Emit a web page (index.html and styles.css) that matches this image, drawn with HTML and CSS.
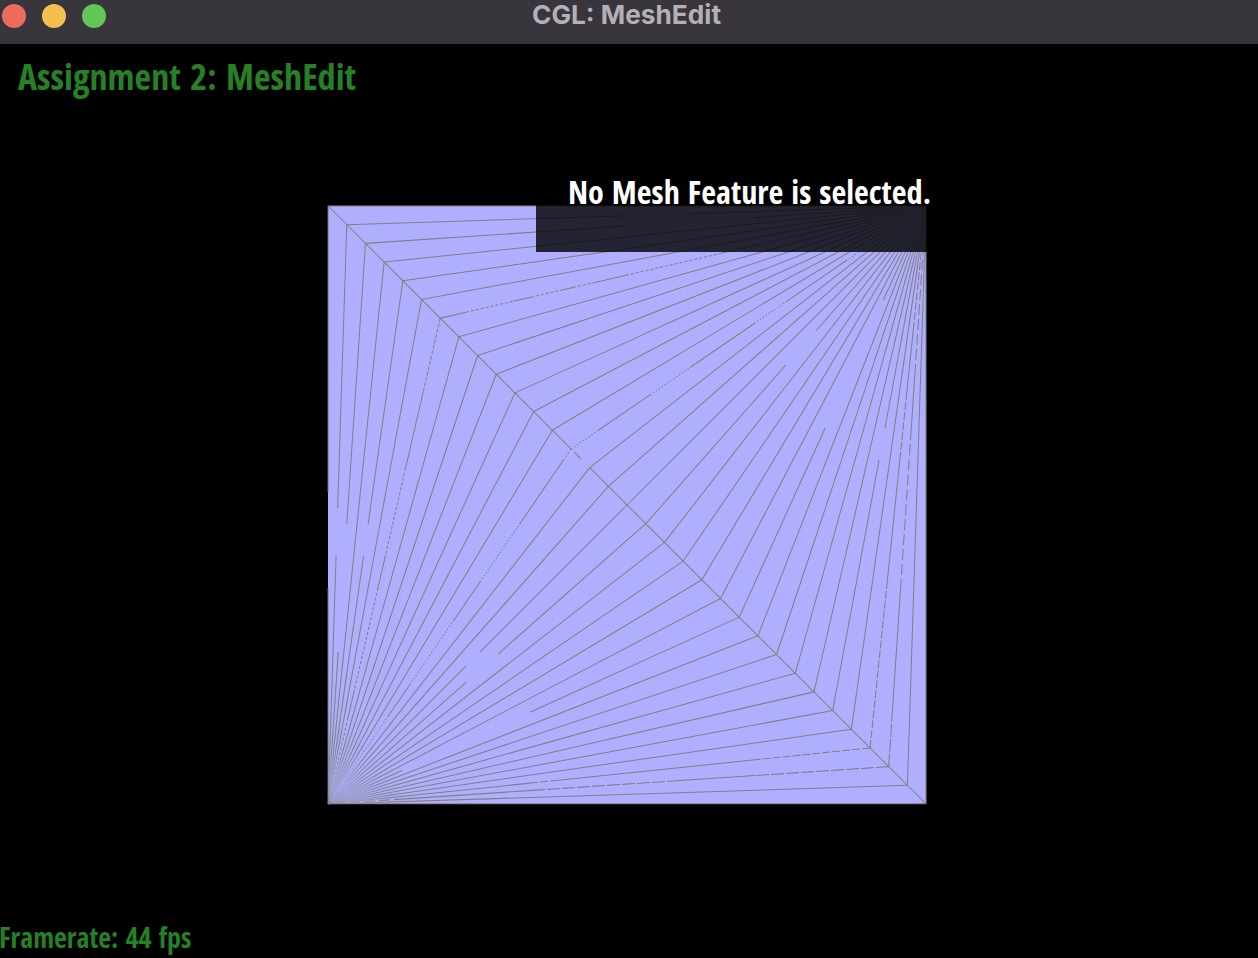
FILE: index.html
```html
<!DOCTYPE html>
<html lang="en">
<head>
<meta charset="utf-8">
<title>CGL: MeshEdit</title>
<link rel="stylesheet" href="styles.css">
</head>
<body>
<div class="window">
  <header class="titlebar">
    <div class="lights"><span class="light close"></span><span class="light minimize"></span><span class="light expand"></span></div>
    <svg class="title" viewBox="0 0 200 30"><text x="4" y="24" textLength="189" lengthAdjust="spacingAndGlyphs">CGL: MeshEdit</text></svg>
  </header>
  <main class="viewport">
    <svg class="scene" viewBox="0 44 1258 914">
      <defs>
        <radialGradient id="fan-lower" gradientUnits="userSpaceOnUse" cx="328" cy="804" r="60">
          <stop offset="0" stop-color="#808080" stop-opacity=".12"/>
          <stop offset=".4" stop-color="#808080" stop-opacity=".4"/>
          <stop offset="1" stop-color="#808080"/>
        </radialGradient>
        <radialGradient id="fan-upper" gradientUnits="userSpaceOnUse" cx="926" cy="206" r="60">
          <stop offset="0" stop-color="#808080" stop-opacity=".12"/>
          <stop offset=".4" stop-color="#808080" stop-opacity=".4"/>
          <stop offset="1" stop-color="#808080"/>
        </radialGradient>
      </defs>
      <rect class="face" x="328" y="206" width="598" height="598"/>
      <g id="edges" class="edges"></g>
      <rect class="panel" x="536" y="205" width="391" height="47"/>
      <text class="hud green title-text" font-size="36" x="18" y="90" textLength="338" lengthAdjust="spacingAndGlyphs">Assignment 2: MeshEdit</text>
      <text class="hud white" font-size="32" x="568" y="204" textLength="363" lengthAdjust="spacingAndGlyphs">No Mesh Feature is selected.</text>
      <text class="hud green" font-size="28" x="-1" y="948" textLength="192.5" lengthAdjust="spacingAndGlyphs">Framerate: 44 fps</text>
    </svg>
  </main>
</div>
<script src="mesh.js"></script>
</body>
</html>
```
FILE: styles.css
```css
body { margin: 0; background: #000; font-family: "Open Sans", sans-serif; }
.window { display: flex; flex-direction: column; width: 1258px; height: 958px; overflow: hidden; }
.titlebar { display: grid; grid-template-columns: 528px 200px 1fr; height: 44px; background: #39353c; }
.lights { display: flex; gap: 16px; padding: 4px 0 0 2px; }
.light { width: 24px; height: 24px; border-radius: 50%; }
.close { background: #ed6a5e; }
.minimize { background: #f5bf4f; }
.expand { background: #62c554; }
.title { width: 200px; height: 30px; fill: #b4b0b7; font: 700 26px Inter, sans-serif; }
.viewport { height: 914px; }
.scene { display: block; width: 1258px; height: 914px; }
.face { fill: #b0afff; }
.edges { stroke: #808080; stroke-width: 1.05; fill: none; }
.panel { fill: #000; fill-opacity: .8; }
.hud { font-family: "Open Sans", sans-serif; font-weight: 700; font-stretch: condensed; word-spacing: 2.2px; }
.title-text { word-spacing: 3px; }
.green { fill: #268026; }
.white { fill: #fff; }
```
FILE: mesh.js
```js
const group = document.getElementById("edges");
const L = 328.1, T = 206, S = 598;

function edge(x1, y1, x2, y2, dash, stroke) {
  const e = document.createElementNS("http://www.w3.org/2000/svg", "line");
  e.setAttribute("x1", x1); e.setAttribute("y1", y1);
  e.setAttribute("x2", x2); e.setAttribute("y2", y2);
  if (dash) e.setAttribute("stroke-dasharray", dash);
  if (stroke) e.setAttribute("stroke", stroke);
  group.appendChild(e);
}

// Draws a fan edge, split along one axis into [from, to, dash] spans.
function spans(x1, y1, x2, y2, axis, list, stroke) {
  const a = axis === "x" ? x1 : y1, b = axis === "x" ? x2 : y2;
  for (const [from, to, dash] of list) {
    const s = from === null ? 0 : (from - a) / (b - a);
    const t = to === null ? 1 : (to - a) / (b - a);
    edge(x1 + (x2 - x1) * s, y1 + (y2 - y1) * s, x1 + (x2 - x1) * t, y1 + (y2 - y1) * t, dash, stroke);
  }
}

const full = [[null, null]];
const lower = {
  1: ["y", [[null, 508], [556, null]]],
  2: ["y", [[null, 524], [652, null]]],
  4: ["y", [[null, 524], [556, null]]],
  6: ["y", [[null, 392, "4 1.5"], [392, 468], [468, 555, "3 2"], [555, 588], [588, 690, "3 2"], [690, 718], [718, null, "3 2"]]],
  13: ["y", [[null, 460, "2 2"], [460, 523], [523, 581, "1.5 2"], [581, 620], [620, 684, "1.5 2"], [684, 716], [716, null, "1.5 2"]]],
  16: ["x", [[null, 480], [466, null]]],
  17: ["x", [[null, 498], [466, null]]],
  22: ["x", [[null, 530], [402, null]]],
  29: ["x", [[null, 755, "8 2"], [755, 558], [558, 530, "8 2"], [530, null]]],
  30: ["x", [[null, 755, "13 2"], [755, 680], [680, 540, "13 2"], [540, 405], [405, null, "11 4"]]]
};
const upper = {
  1: ["x", [[null, 626], [690, null]]],
  2: ["x", [[null, 626], [754, null]]],
  6: ["x", [[null, 466], [466, 514, "3 2"], [514, 531], [531, 562, "3 2"], [562, 573], [573, 594, "3 2"], [594, 626], [626, 722, "3 2"], [722, 757], [757, 786, "3 2"], [786, null]]],
  13: ["x", [[null, 598, "1.5 2"], [598, 650], [650, 690, "1.5 2"], [690, 754], [754, 786, "1.5 2"], [786, 846], [846, null, "1.5 2"]]],
  17: ["y", [[null, 365], [331, null]]],
  22: ["y", [[null, 428], [300, null]]],
  27: ["y", [[null, 460], [428, null]]],
  29: ["y", [[null, 588, "8 2"], [588, 460], [460, 400, "8 2"], [400, 330], [330, null, "8 2"]]],
  30: ["y", [[null, 715, "13 2"], [715, 590], [590, 430, "11 4"], [430, 375], [375, null, "11 4"]]]
};

for (let k = 1; k < 32; k++) {
  const x = L + S * k / 32, y = T + S * k / 32;
  const [la, ls] = lower[k] || ["x", full];
  const [ua, us] = upper[k] || ["x", full];
  spans(x, y, L, T + S, la, ls, "url(#fan-lower)");
  spans(x, y, L + S, T, ua, us, "url(#fan-upper)");
}
spans(L, T, L + S, T + S, "x", [[null, 571], [574, 581], [590, null]]);
edge(328, 206, 926, 206);
edge(328, 803.8, 926, 803.8);
edge(926, 206, 926, 804);
edge(328.1, 206, 328.1, 492);
edge(328.1, 588, 328.1, 804);
```
